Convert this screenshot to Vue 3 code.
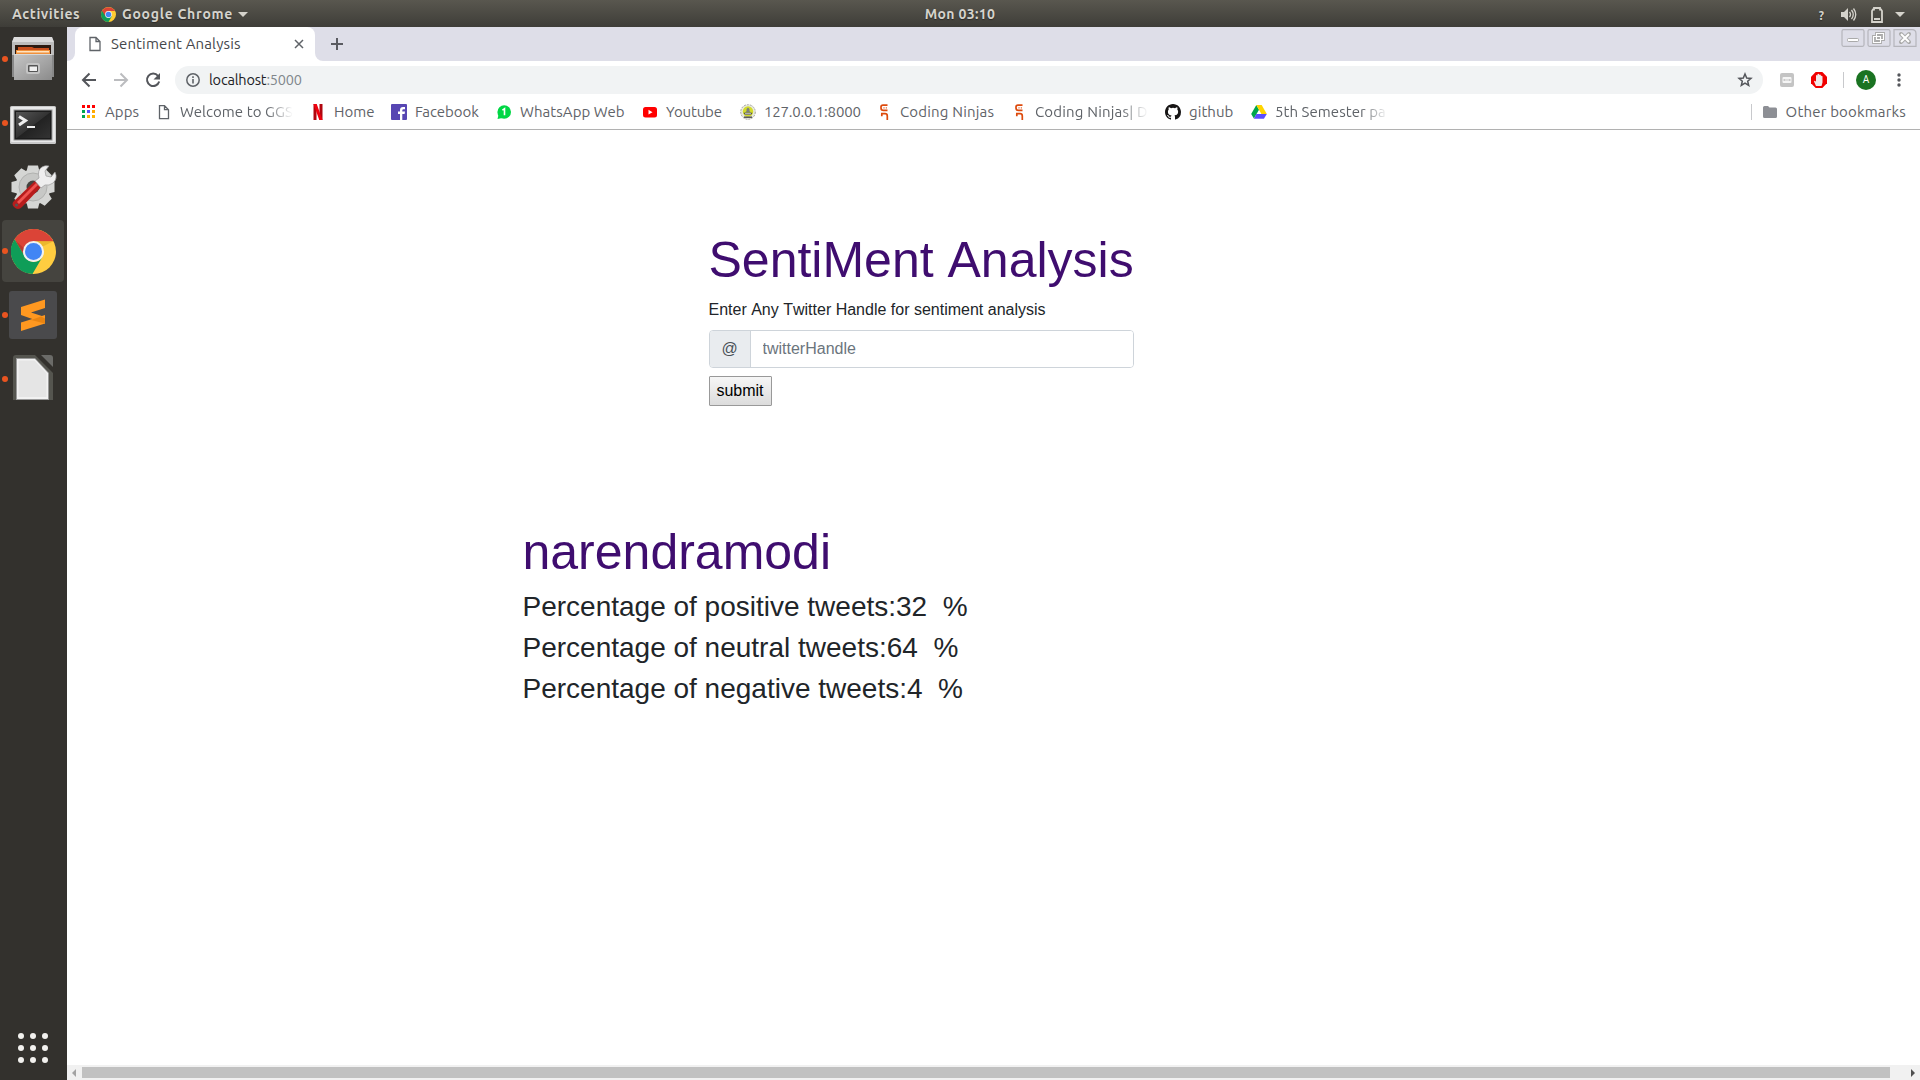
<script setup>
const bookmarks = [
  { icon: 'apps', label: 'Apps', w: 34 },
  { icon: 'doc', label: 'Welcome to GGS', w: 113, fade: true },
  { icon: 'netflix', label: 'Home', w: 40 },
  { icon: 'facebook', label: 'Facebook', w: 64 },
  { icon: 'whatsapp', label: 'WhatsApp Web', w: 105 },
  { icon: 'youtube', label: 'Youtube', w: 57 },
  { icon: 'local', label: '127.0.0.1:8000', w: 95 },
  { icon: 'ninja', label: 'Coding Ninjas', w: 94 },
  { icon: 'ninja', label: 'Coding Ninjas| D', w: 113, fade: true },
  { icon: 'github', label: 'github', w: 45 },
  { icon: 'drive', label: '5th Semester pa', w: 113, fade: true },
]
const results = [
  { name: 'positive', value: 32 },
  { name: 'neutral', value: 64 },
  { name: 'negative', value: 4 },
]
const dock = [
  { id: 'files', open: true },
  { id: 'terminal', open: true },
  { id: 'settings', open: false },
  { id: 'chrome', open: true, active: true },
  { id: 'sublime', open: true },
  { id: 'office', open: true },
]
const dots = [0, 1, 2, 3, 4, 5, 6, 7, 8]
const appColors = ['#f00', '#f00', '#f00', '#00a651', '#5b50ff', '#ffa800', '#00a651', '#ffb400', '#ffb400']
const teeth = [0, 45, 90, 135, 180, 225, 270, 315]
</script>

<template>
  <div class="screen">
    <header class="topbar">
      <div class="top-left">
        <span class="activities">Activities</span>
        <svg class="mini-chrome" width="15" height="15" viewBox="0 0 44 44">
          <circle cx="22" cy="22" r="22" fill="#fc3" />
          <path d="M3 11A22 22 0 0 0 22 44L32 27Z" fill="#0f9d58" />
          <path d="M22 12H41.500L40 10A22 22 0 0 0 3 11L13 27Z" fill="#db4437" />
          <circle cx="22" cy="22" r="10" fill="#f4f4f4" /><circle cx="22" cy="22" r="8" fill="#4285f4" />
        </svg>
        <span class="appname">Google Chrome</span>
        <i class="caret"></i>
      </div>
      <span class="clock">Mon 03:10</span>
      <div class="top-right">
        <span class="q">?</span>
        <svg class="vol" width="17" height="16" viewBox="0 0 17 16">
          <path d="M1 5h3l4-4v13l-4-4H1z" fill="#d5d3cc" />
          <path d="M9.500 5q2 2.500 0 5M11.500 3q3.500 4.500 0 9M13.500 1.500q4.500 6 0 12" fill="none" stroke="#d5d3cc" stroke-width="1.300" />
        </svg>
        <svg class="batt" width="12" height="16" viewBox="0 0 12 16">
          <path d="M3 2.500V1h6v1.500h1L11 4v11H1V4l1-1.500z" fill="none" stroke="#d5d3cc" stroke-width="1.800" />
          <path d="M3 11h6v2H3z" fill="#d5d3cc" />
        </svg>
        <i class="caret"></i>
      </div>
    </header>

    <div class="workspace">
      <nav class="dock">
        <div v-for="d in dock" :key="d.id" class="dock-item" :class="{ active: d.active }">
          <i v-if="d.open" class="running"></i>
          <svg v-if="d.id === 'files'" width="48" height="48" viewBox="0 0 48 48">
            <defs>
              <linearGradient id="cab" x1="0" y1="0" x2="1" y2="1"><stop offset="0" stop-color="#c6c6c6" /><stop offset="1" stop-color="#8b8b8b" /></linearGradient>
            </defs>
            <path d="M5 2h38l2 5v35H3V7z" fill="#888" />
            <path d="M5 2h38l2 5v3H3V7z" fill="#dcdcdc" />
            <path d="M3 7h42v13H3z" fill="#bdbdbd" />
            <rect x="6" y="10" width="36" height="12" fill="#2d1a10" />
            <path d="M9 12h14l2 1h15v3H9z" fill="#c9501d" />
            <path d="M7 15h34v6H7z" fill="#f0913c" /><path d="M8 16h32v1.500H8z" fill="#ffe3c0" />
            <rect x="5" y="19" width="38" height="26" fill="url(#cab)" />
            <path d="M5 19.500h38" stroke="#d8d8d8" />
            <rect x="17" y="28" width="14" height="11" rx="2.500" fill="#c4c4c4" />
            <rect x="19" y="30" width="10" height="7" rx="1" fill="#555" /><rect x="20.500" y="31.500" width="7.500" height="4.500" fill="#f0f0f0" />
          </svg>
          <svg v-else-if="d.id === 'terminal'" width="48" height="48" viewBox="0 -1 48 48">
            <defs>
              <linearGradient id="term" x1="0" y1="0" x2="1" y2="1"><stop offset="0" stop-color="#555" /><stop offset=".5" stop-color="#333" /><stop offset=".52" stop-color="#222" /><stop offset="1" stop-color="#333" /></linearGradient>
            </defs>
            <rect x="1" y="6" width="46" height="38" rx="1.500" fill="#c9c9c9" />
            <rect x="2" y="7" width="44" height="35" rx="1" fill="#e9e9e9" />
            <rect x="4.500" y="9.500" width="39" height="31" fill="#999" />
            <rect x="5.500" y="10.500" width="37" height="29" fill="#1c1c1c" />
            <rect x="7" y="12" width="34" height="26" fill="url(#term)" />
            <path d="M10 16.500l6.500 4-6.500 4.500" fill="none" stroke="#eee" stroke-width="3" /><path d="M18 27h8" stroke="#eee" stroke-width="2" />
          </svg>
          <svg v-else-if="d.id === 'settings'" width="48" height="48" viewBox="0 0 48 48">
            <g fill="#d5d6d4">
              <path v-for="a in teeth" :key="a" d="M19 2.500h10l2 8H17z" :transform="`rotate(${a} 24 24)`" />
              <circle cx="24" cy="24" r="17.500" />
            </g>
            <circle cx="24" cy="24" r="14" fill="#c7c8c6" stroke="#b1b2b0" />
            <circle cx="24" cy="24" r="6.500" fill="#44433f" />
            <path d="M5 38 26 18l6 6-19 20Q9 48 5 44q-3-3 0-6z" fill="#b71c1c" />
            <path d="M8 39 27 20l2 2L10 41z" fill="#ef5350" />
            <circle cx="7.500" cy="42" r="1.500" fill="#555" />
            <path d="M26 18l4-3q-2-8 3-11 3-2 7-1l-4 5 1 5 5 1 4-5q3 7-2 11-4 3-8 2l-4 3z" fill="#eee" stroke="#999" stroke-width=".7" />
          </svg>
          <svg v-else-if="d.id === 'chrome'" width="45" height="45" viewBox="0 0 44 44">
            <circle cx="22" cy="22" r="22" fill="#ffcd40" />
            <path d="M22 12H41.500A22 22 0 0 0 3.500 10L13.300 27Z" fill="#db4437" />
            <path d="M3.500 10A22 22 0 0 0 21 44L31 27A10 10 0 0 1 13 26Z" fill="#0f9d58" />
            <path d="M4 11l9 8-1 5z" fill="#912d25" opacity=".45" />
            <path d="M22 12h19.500L31 17z" fill="#d9a31c" opacity=".5" />
            <circle cx="22" cy="22" r="10.300" fill="#f1f1f1" /><circle cx="22" cy="22" r="8.300" fill="#4285f4" />
          </svg>
          <svg v-else-if="d.id === 'sublime'" width="48" height="48" viewBox="0 0 48 48">
            <rect width="48" height="48" rx="3" fill="#4a4a4c" />
            <path d="M12 31.500 36 24v8.500L12 40z" fill="#ff9820" />
            <path d="M12 16 36 8.500V17l-14 4.500 14 4.500v6.500L12 24z" fill="#ff9820" />
            <path d="M22 29l10-3.500 4 2v5z" fill="#df7c0c" opacity=".7" />
          </svg>
          <svg v-else width="48" height="48" viewBox="0 0 48 48">
            <path d="M4 3q0-3 3-3h19l18 18v27H4z" fill="#55554f" />
            <path d="M7 3h19l14 15v27H7z" fill="#999" />
            <path d="M8 4h18l13 14v26H8z" fill="#f2f2f2" />
            <path d="M9.500 5.500h16l12 13V42h-28z" fill="#e5e5e5" />
            <path d="M32 0h9q3 0 3 3v9z" fill="#6b6b68" />
          </svg>
        </div>
        <div class="app-grid"><i v-for="n in dots" :key="n"></i></div>
      </nav>

      <main class="browser">
        <div class="tabstrip">
          <div class="corner left"></div>
          <div class="tab">
            <svg class="tab-doc" width="12" height="16" viewBox="0 0 12 16"><path d="M1 1.500h6l4 4v9H1zM7 1.500v4h4" fill="none" stroke="#5f6368" stroke-width="1.300" /></svg>
            <span class="tab-title">Sentiment Analysis</span>
            <svg class="tab-x" width="10" height="10" viewBox="0 0 10 10"><path d="M1 1l8 8M9 1L1 9" stroke="#5f6368" stroke-width="1.500" /></svg>
          </div>
          <div class="corner right"></div>
          <svg class="newtab" width="12" height="12" viewBox="0 0 12 12"><path d="M6 0v12M0 6h12" stroke="#5a5b61" stroke-width="2" /></svg>
          <div class="winbtns">
            <svg width="24" height="18" viewBox="0 0 24 18"><rect x="1" y=".7" width="22" height="16.600" rx="1.500" fill="none" stroke="#b5b5bb" stroke-width="1.200" /><rect x="6.500" y="9.500" width="11" height="3" rx="1" fill="#fff" stroke="#aaa" /></svg>
            <svg width="24" height="18" viewBox="0 0 24 18"><rect x="1" y=".7" width="22" height="16.600" rx="1.500" fill="none" stroke="#b5b5bb" stroke-width="1.200" /><path d="M9.500 4.500h7v6h-7zM6.500 7.500h7v6h-7z" fill="none" stroke="#aaa" stroke-width="2.800" /><path d="M9.500 4.500h7v6h-7zM6.500 7.500h7v6h-7z" fill="none" stroke="#fff" stroke-width="1.100" /></svg>
            <svg width="24" height="18" viewBox="0 0 24 18"><path d="M1 .7h18q4 0 4 4v12.600H1z" fill="none" stroke="#b5b5bb" stroke-width="1.200" /><path d="M8 5l8 8M16 5l-8 8" stroke="#aaa" stroke-width="4" stroke-linecap="round" /><path d="M8 5l8 8M16 5l-8 8" stroke="#fff" stroke-width="2" /></svg>
          </div>
        </div>

        <div class="toolbar">
          <svg class="nav" width="16" height="16" viewBox="0 0 16 16"><path d="M15 8H2M8.500 1.500 2 8l6.500 6.500" fill="none" stroke="#54565b" stroke-width="2" /></svg>
          <svg class="nav" width="16" height="16" viewBox="0 0 16 16"><path d="M1 8h13M7.500 1.500 14 8l-6.500 6.500" fill="none" stroke="#bbbcbf" stroke-width="2" /></svg>
          <svg class="nav" width="16" height="16" viewBox="0 0 16 16"><path d="M13 3.800A6.200 6.200 0 1 0 14.200 9.500" fill="none" stroke="#54565b" stroke-width="2" /><path d="M15 1v6.500H8.500z" fill="#54565b" /></svg>
          <div class="omnibox">
            <svg width="14" height="14" viewBox="0 0 14 14"><circle cx="7" cy="7" r="6.200" fill="none" stroke="#5f6368" stroke-width="1.500" /><path d="M7 6v4.500M7 3.300v1.600" stroke="#5f6368" stroke-width="1.600" /></svg>
            <span class="url">localhost<em>:5000</em></span>
            <svg class="star" width="16" height="16" viewBox="0 0 16 16"><path d="M8 2l1.700 4 4.300.4-3.300 2.800 1 4.300L8 11.200l-3.700 2.300 1-4.300L2 6.400 6.300 6z" fill="none" stroke="#54565b" stroke-width="1.500" /></svg>
          </div>
          <svg class="ext1" width="14" height="14" viewBox="0 0 14 14"><rect width="14" height="14" rx="2" fill="#c4c4c4" /><rect x="2.500" y="4" width="9" height="6" rx="1" fill="#f5f5f5" /><path d="M3.500 7h2m1 0h1m1 0h2" stroke="#bbb" stroke-width="1.500" /></svg>
          <svg class="ext2" width="16" height="16" viewBox="0 0 16 16"><path d="M4.700 0h6.600L16 4.700v6.600L11.300 16H4.700L0 11.300V4.700z" fill="#f00000" /><path d="M5 14 3 9.500q.5-1.500 2 .2V3.500q.8-1 1.500 0V2.200q.9-1 1.700 0v.7q.9-1 1.700.2v1q1-.8 1.600.3v6L10.500 14z" fill="#f1eaea" /></svg>
          <i class="sep"></i>
          <span class="avatar">A</span>
          <svg class="menu" width="4" height="14" viewBox="0 0 4 14" fill="#54565b"><circle cx="2" cy="2" r="1.700" /><circle cx="2" cy="7" r="1.700" /><circle cx="2" cy="12" r="1.700" /></svg>
        </div>

        <div class="bookmarks">
          <div v-for="(b, i) in bookmarks" :key="i" class="bm">
            <svg width="16" height="16" viewBox="0 0 16 16">
              <g v-if="b.icon === 'apps'"><rect v-for="(c, n) in appColors" :key="n" :x="1 + (n % 3) * 5" :y="1 + Math.floor(n / 3) * 5" width="3" height="3" :fill="c" /></g>
              <path v-else-if="b.icon === 'doc'" d="M3.500 1.700h5l4 4v9h-9zM8.500 1.700v4h4" fill="none" stroke="#5f6368" stroke-width="1.300" />
              <g v-else-if="b.icon === 'netflix'"><path d="M3.500 0h3v16h-3zM9.500 0h3v16h-3z" fill="#b1060f" /><path d="M3.500 0h3.200l5.800 16H9.300z" fill="#f0000d" /></g>
              <g v-else-if="b.icon === 'facebook'"><rect width="16" height="16" rx="1" fill="#5746b3" /><path d="M9 16v-6H7V7.600h2V6q0-3 3-3h2v2.300h-1.500q-1.200 0-1.200 1.200v1.100H14L13.600 10h-2.300v6z" fill="#fff" /></g>
              <g v-else-if="b.icon === 'whatsapp'"><circle cx="8.200" cy="8" r="6.800" fill="#00d744" /><path d="M1.500 15l1.300-5 3.500 4z" fill="#00d744" /><path d="M6.400 6.200l2.100-1.400v6.500" fill="none" stroke="#fff" stroke-width="1.600" /></g>
              <g v-else-if="b.icon === 'youtube'"><rect x="1" y="3" width="14" height="10.500" rx="2.500" fill="#f00" /><path d="M6.500 5.800v4.800l4-2.400z" fill="#fff" /></g>
              <g v-else-if="b.icon === 'local'"><circle cx="8" cy="8" r="7.300" fill="#e9e9e0" stroke="#a5a59c" stroke-dasharray="2 1" /><circle cx="8" cy="7.500" r="5.200" fill="#d3dc2a" /><path d="M6.500 5l1.500-1.500L9.500 5v2l1.500 1.500H5L6.500 7z" fill="#7c8078" /><path d="M3.500 8.700h9l-1.500 2H5z" fill="#444" /><path d="M5 9.800h6" stroke="#ddd" /><path d="M4 13.200h8" stroke="#555" stroke-width="1.500" /></g>
              <g v-else-if="b.icon === 'ninja'" fill="none" stroke="#dd4a0c" stroke-width="1.700"><path d="M11.500 1.200H7Q5 1.200 5 3v1q0 2.400 2.500 2.400h4M5 9.700h4q2.300 0 2.300 2.300v4M5.800 9.700v2.500" /><path d="M7.500 3.900h1M9.800 3.900h1" stroke-width="1.100" /></g>
              <path v-else-if="b.icon === 'github'" d="M8 0C3.580 0 0 3.580 0 8c0 3.540 2.290 6.530 5.470 7.590.4.070.55-.17.55-.38 0-.19-.01-.82-.01-1.490-2.010.37-2.530-.49-2.690-.94-.09-.23-.48-.94-.82-1.130-.28-.15-.68-.52-.01-.53.63-.01 1.080.58 1.230.82.72 1.210 1.870.87 2.330.66.07-.52.28-.87.51-1.070-1.780-.2-3.640-.89-3.640-3.950 0-.87.31-1.590.82-2.150-.08-.2-.36-1.020.08-2.120 0 0 .67-.21 2.200.82a7.600 7.600 0 0 1 4 0c1.530-1.040 2.200-.82 2.200-.82.44 1.100.16 1.920.08 2.120.51.56.82 1.270.82 2.150 0 3.070-1.870 3.750-3.650 3.950.29.25.54.73.54 1.480 0 1.070-.01 1.930-.01 2.200 0 .21.15.46.55.38A8.010 8.010 0 0 0 16 8c0-4.420-3.580-8-8-8z" fill="#171515" />
              <g v-else><path d="M5.300 1 8 5.700 2.900 14.500.2 10z" fill="#00a54b" /><path d="M5.300 1h5.400l5.100 9h-5.400z" fill="#ffd500" /><path d="M5.300 10h10.500l-2.900 4.700h-10z" fill="#5b4dff" /></g>
            </svg>
            <span class="bm-label" :class="[{ fade: b.fade }, 'l-' + b.icon]" :style="{ width: b.w + 'px' }">{{ b.label }}</span>
          </div>
          <div class="other">
            <i class="sep"></i>
            <svg width="14" height="12" viewBox="0 0 14 12"><path d="M1.500 0H5l1.500 1.500h6Q14 1.500 14 3v7.500q0 1.500-1.500 1.500h-11Q0 12 0 10.500v-9Q0 0 1.500 0z" fill="#8d8f95" /></svg>
            <span>Other bookmarks</span>
          </div>
        </div>

        <section class="page">
          <form class="search" @submit.prevent>
            <h1>SentiMent Analysis</h1>
            <p>Enter Any Twitter Handle for sentiment analysis</p>
            <div class="group"><span class="at">@</span><input type="text" placeholder="twitterHandle" /></div>
            <button type="submit">submit</button>
          </form>
          <div class="results">
            <h1>narendramodi</h1>
            <h3 v-for="r in results" :key="r.name">Percentage of {{ r.name }} tweets:{{ r.value }}&nbsp; %</h3>
          </div>
        </section>

        <div class="scroll"><i class="arrow l"></i><div class="thumb"></div><i class="arrow r"></i></div>
      </main>
    </div>
  </div>
</template>

<style>
body { margin: 0; overflow: hidden; }
</style>

<style scoped>
* { box-sizing: border-box; }
svg { display: block; flex: none; }
.screen { width: 1920px; height: 1080px; display: flex; flex-direction: column; background: #fff; font-family: Ubuntu, "Noto Sans", sans-serif; overflow: hidden; }
.topbar { height: 27px; flex: none; display: grid; grid-template-columns: 1fr auto 1fr; align-items: center; background: linear-gradient(#59574f, #3e3d38); color: #d5d3cc; font-size: 14px; font-weight: 600; line-height: 27px; text-shadow: 0 1px 1px #2b2a27; }
.top-left { display: flex; align-items: center; padding-left: 12px; }
.activities { width: 89px; letter-spacing: 0.600px; }
.mini-chrome { margin-top: -1px; }
.appname { margin-left: 6px; width: 112px; white-space: nowrap; letter-spacing: 0.720px; }
.clock { letter-spacing: 0.350px; }
.caret { width: 0; height: 0; margin-left: 4px; border: 5px solid transparent; border-top-color: #d5d3cc; border-bottom: 0; }
.top-right { display: flex; align-items: center; justify-content: flex-end; padding-right: 15px; }
.q { font-size: 12px; margin-right: 16px; padding-top: 2px; }
.vol { margin-right: 14px; }
.batt { margin-right: 8px; }
.workspace { flex: 1; display: flex; min-height: 0; }
.dock { width: 67px; flex: none; background: #33312d; display: flex; flex-direction: column; }
.dock-item { position: relative; width: 66px; height: 64px; display: flex; align-items: center; justify-content: center; }
.dock-item.active { width: 62px; height: 62px; margin: 1px 2px; border-radius: 4px; background: #45443f; }
.running { position: absolute; left: 2px; top: 29px; width: 6px; height: 6px; border-radius: 50%; background: #e95420; }
.active .running { left: 0; top: 28px; }
.app-grid { margin: auto 0 17px 18px; display: grid; grid-template-columns: repeat(3, 6px); gap: 6px; }
.app-grid i { width: 6px; height: 6px; border-radius: 50%; background: #f2f1ee; }
.browser { flex: 1; min-width: 0; display: flex; flex-direction: column; background: #fff; }
.tabstrip { height: 34px; flex: none; display: flex; background: #dedee8; }
.corner { width: 8px; background: #fff; }
.corner::before { content: ""; display: block; height: 34px; background: #dedee8; }
.corner.left::before { border-bottom-right-radius: 8px; }
.corner.right::before { border-bottom-left-radius: 8px; }
.tab { width: 240px; display: flex; align-items: center; padding: 0 11px 0 14px; background: #fff; border-radius: 8px 8px 0 0; }
.tab-title { margin-left: 10px; padding-bottom: 2px; font-size: 15px; letter-spacing: 0.130px; color: #45474b; flex: 1; white-space: nowrap; }
.newtab { margin: 11px 0 0 8px; }
.winbtns { display: flex; gap: 2px; margin: 2px 3px 0 auto; }
.toolbar { height: 37px; flex: none; display: flex; align-items: center; padding: 0 19px 0 14px; }
.nav { margin-right: 16px; }
.omnibox { width: 1588px; height: 28px; margin: 1px 0 0 -2px; border-radius: 14px; background: #f1f3f4; display: flex; align-items: center; padding: 0 10px 0 11px; }
.url { margin-left: 9px; padding-bottom: 2px; color: #202124; font-size: 14.500px; letter-spacing: -0.180px; }
.url em { font-style: normal; color: #80868b; }
.star { margin-left: auto; }
.ext1 { margin-left: 17px; }
.ext2 { margin-left: 17px; }
.sep { width: 1px; height: 16px; background: #c8c9cc; margin-left: 16px; }
.avatar { width: 20px; height: 20px; margin-left: 12px; border-radius: 50%; background: #1a7322; color: #fff; font: 10px/20px Roboto, sans-serif; text-align: center; }
.menu { margin-left: auto; }
.bookmarks { height: 32px; flex: none; display: flex; align-items: center; padding: 0 14px 4px; border-bottom: 1px solid #b1b1b1; }
.bm { display: flex; align-items: center; gap: 8px; margin-right: 17px; }
.bm-label, .other span { font-size: 15px; line-height: 20px; letter-spacing: 0.060px; color: #5f6368; white-space: nowrap; }
.l-local { letter-spacing: -0.190px; }
.l-ninja { letter-spacing: 0.180px; }
.l-facebook { letter-spacing: -0.040px; }
.l-youtube { letter-spacing: -0.150px; }
.other span { letter-spacing: 0.170px; }
.fade { -webkit-mask-image: linear-gradient(90deg, #000 76%, transparent); mask-image: linear-gradient(90deg, #000 76%, transparent); }
.other { margin-left: auto; display: flex; align-items: center; }
.other svg { margin: 0 9px 0 11px; }
.page { flex: 1; min-height: 0; font-family: "Liberation Sans", Arial, sans-serif; font-kerning: none; color: #212529; font-size: 16px; line-height: 24px; }
.search { width: 425px; margin: 100px 0 0 641.5px; }
.results { margin: 116px 0 0 455.5px; }
h1 { margin: 0 0 8px; font-size: 50px; font-weight: 400; line-height: 60px; color: #3f0d6f; white-space: nowrap; }
h3 { margin: 0 0 8px; font-size: 28px; font-weight: 400; line-height: 33px; white-space: pre; }
p { margin: 0 0 8px; }
.group { display: flex; height: 38px; border: 1px solid #ced4da; border-radius: 4px; overflow: hidden; }
.at { width: 41px; line-height: 36px; text-align: center; background: #e9ecef; border-right: 1px solid #ced4da; color: #495057; }
input { flex: 1; border: 0; outline: 0; padding: 0 12px; font: inherit; }
input::placeholder { color: #6c757d; opacity: 1; }
button { display: block; margin-top: 8px; width: 63px; height: 30px; padding: 0; border: 1px solid #999; border-radius: 1px; background: linear-gradient(#f6f6f6, #dcdcdc); font: inherit; color: #000; }
.scroll { height: 15px; flex: none; display: flex; align-items: center; background: #f1f1f1; padding: 0 5px; }
.thumb { width: 1808px; height: 11px; margin-left: 6px; background: #c1c1c1; }
.arrow { width: 0; height: 0; border: 4px solid transparent; }
.arrow.l { border-right-color: #a3a3a3; border-left: 0; }
.arrow.r { border-left-color: #505050; border-right: 0; margin-left: auto; }
</style>
